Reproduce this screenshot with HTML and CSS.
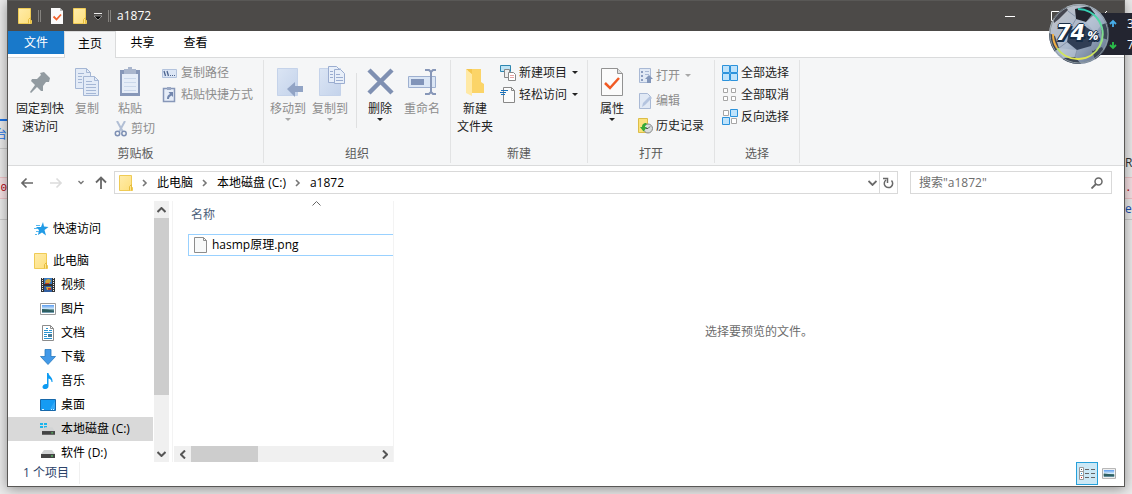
FILE: index.html
```html
<!DOCTYPE html>
<html lang="zh-CN">
<head>
<meta charset="utf-8">
<title>a1872</title>
<link rel="stylesheet" href="styles.css">
</head>
<body>
<svg class="defs" aria-hidden="true">
  <defs>
    <linearGradient id="gold" x1="0" y1="0" x2="1" y2="1"><stop offset="0" stop-color="#ffecaa"/><stop offset="1" stop-color="#fddf7c"/></linearGradient>
    <linearGradient id="sky" x1="0" y1="0" x2="0" y2="1"><stop offset="0" stop-color="#5a9cf0"/><stop offset=".5" stop-color="#d5ebfa"/><stop offset=".6" stop-color="#3f7474"/><stop offset="1" stop-color="#7fa6bd"/></linearGradient>
    <linearGradient id="steel" x1="0" y1="0" x2="1" y2="1"><stop offset="0" stop-color="#dbe5f4"/><stop offset="1" stop-color="#c4d3eb"/></linearGradient>
    <symbol id="folder" viewBox="0 0 14 16"><path d="M.5.5h12v11l1 1v3H.5z" fill="url(#gold)" stroke="#efcb55"/><path d="M10.500 15.500v-4l2-2v6" fill="#ffe48a" stroke="#e6bd3e"/></symbol>
    <symbol id="picture" viewBox="0 0 16 12"><path d="M.5.5h15v11H.5z" fill="#fff" stroke="#9b9b9b"/><path d="M2 2h12v8H2z" fill="url(#sky)"/><path d="M2 6q5 0 12 2v1H2z" fill="#2f5f62"/></symbol>
    <symbol id="down" viewBox="0 0 6 4"><path d="M0 0h6L3 3z" fill="currentColor"/></symbol>
    <symbol id="chev" viewBox="0 0 6 8"><path d="M1 1l3 3-3 3" fill="none" stroke="#777" stroke-width="1.6"/></symbol>
    <symbol id="drive" viewBox="0 0 14 9"><path d="M3 0h8l3 4H0z" fill="#d2d4d5"/><path d="M0 4h14v4H0z" fill="#444"/><path d="M10 5.500h2v1h-2z" fill="#5ee36c"/></symbol>
  </defs>
</svg>

<aside class="edge edge-left">
  <div class="edge-tab">台</div>
  <div class="edge-gap"></div>
  <div class="edge-error">80</div>
  <div class="edge-row"></div>
</aside>

<main class="window">
  <header class="titlebar">
    <svg class="t-folder" width="14" height="16"><use href="#folder"/></svg>
    <i class="grip"></i>
    <svg class="t-doc" width="12" height="16" viewBox="0 0 12 16"><path d="M0 0h9l3 3v13H0z" fill="#fafafa"/><path d="M9 0v3h3" fill="#bbb"/><path d="M2.500 8.500l3 3 4.500-5" fill="none" stroke="#f0622d" stroke-width="1.800"/></svg>
    <svg class="t-folder2" width="14" height="16"><use href="#folder"/></svg>
    <svg class="t-more" width="8" height="8" viewBox="0 0 8 8"><path d="M0 1.500h8" stroke="#eee"/><path d="M0 4h8L4 8z" fill="#000" stroke="#ccc" stroke-width=".6"/></svg>
    <i class="grip"></i>
    <h1>a1872</h1>
    <div class="controls">
      <button aria-label="最小化"><svg width="10" height="10" viewBox="0 0 10 10"><path d="M0 5.500h10" stroke="#fff"/></svg></button>
      <button aria-label="最大化"><svg width="10" height="10" viewBox="0 0 10 10"><path d="M.5.5h9v9h-9z" fill="none" stroke="#fff"/></svg></button>
      <button aria-label="关闭"><svg width="10" height="10" viewBox="0 0 10 10"><path d="M0 0l10 10M10 0L0 10" stroke="#fff"/></svg></button>
    </div>
  </header>

  <nav class="tabs">
    <button class="tab file">文件</button>
    <button class="tab active">主页</button>
    <button class="tab">共享</button>
    <button class="tab">查看</button>
  </nav>

  <section class="ribbon">
    <div class="group g-clip">
      <div class="tools">
        <button class="big pin"><svg width="32" height="34" viewBox="0 0 32 34"><path d="M16 7l4-1 6 6-1 4-3 0-3 4 0 5-2 0-4-4-6 6-1-1 5-7-4-4 1-2 5 0 4-4z" fill="#929ba1"/></svg><span>固定到快<br>速访问</span></button>
        <button class="big copy off"><svg width="26" height="34" viewBox="0 0 26 34"><g fill="#e3ebf7" stroke="#a5b7d5"><path d="M1.500 2.500h11l4 4v16h-15z"/><path d="M9.500 10.500h11l4 4v15h-15z"/></g><path d="M20.500 10.500v4h4M12.500 2.500v4h4" fill="none" stroke="#a5b7d5"/><path d="M4 7.500h6M4 10.500h4M4 13.500h4M4 16.500h4M12 15.500h6M12 18.500h10M12 21.500h10M12 24.500h10M12 27.500h10" stroke="#a5b7d5"/></svg><span>复制</span></button>
        <div class="paste-col">
          <button class="big off"><svg width="22" height="34" viewBox="0 0 22 34"><path d="M1 4h20v26H1z" fill="#8797b8"/><path d="M3 8h16v19H3z" fill="#e6edf8"/><path d="M5 12.500h12M5 16.500h12M5 20.500h12M5 24.500h12" stroke="#cbd8eb"/><path d="M5 3h4V1h4v2h4v5H5z" fill="#aab6cd"/></svg><span>粘贴</span></button>
          <button class="small off cut"><svg width="14" height="16" viewBox="0 0 14 16"><path d="M3 0l6 11M11 0L5 11" stroke="#b2bfd5" stroke-width="2"/><circle cx="3.500" cy="12.500" r="2.200" fill="none" stroke="#7e90b4" stroke-width="1.500"/><circle cx="10" cy="12.500" r="2.200" fill="none" stroke="#7e90b4" stroke-width="1.500"/></svg>剪切</button>
        </div>
        <div class="stack">
          <button class="small off"><svg width="15" height="16" viewBox="0 0 15 16"><path d="M.5 4.500h14v8H.5z" fill="#dce6f5" stroke="#b3c3dd"/><path d="M2 6l1.500 5M5 6l1.500 5" stroke="#4d648e" stroke-width="1.300"/><path d="M8 10.500h1M10 10.500h1M12 10.500h1" stroke="#4d648e"/></svg>复制路径</button>
          <button class="small off"><svg width="15" height="16" viewBox="0 0 15 16"><path d="M1.500 1.500h11v13h-11z" fill="#e6edf8" stroke="#8797b8" stroke-width="1.500"/><path d="M5 0h4v3H5z" fill="#9aa8c4"/><path d="M5 12c0-3 1-4 3-5L6.500 5H11v5L9.500 8.500C8 9.500 7 10 7 12z" fill="#7286ad"/></svg>粘贴快捷方式</button>
        </div>
      </div>
      <h2>剪贴板</h2>
    </div>

    <div class="group g-org">
      <div class="tools">
        <button class="big off"><svg width="32" height="34" viewBox="0 0 32 34"><path d="M5.500 2.500h20v27h-20z" fill="url(#steel)" stroke="#c5d3ea"/><path d="M15 23l8-7v4h8v6h-8v5z" fill="#92a4c5"/></svg><span>移动到</span><svg class="arrow" width="6" height="4"><use href="#down"/></svg></button>
        <button class="big off"><svg width="32" height="34" viewBox="0 0 32 34"><path d="M5.500 2.500h21v27h-21z" fill="url(#steel)" stroke="#c5d3ea"/><g fill="#e8eff9" stroke="#9badd0"><path d="M14.500.5h8l3 3v13h-11z"/><path d="M20.500 3.500h6l4 4v10h-10z"/></g><path d="M16 5.500h3M16 8.500h3M16 11.500h3M22 8.500h4M22 11.500h7M22 14.500h7" stroke="#9badd0"/></svg><span>复制到</span><svg class="arrow" width="6" height="4"><use href="#down"/></svg></button>
        <i class="rule"></i>
        <button class="big del"><svg width="28" height="34" viewBox="0 0 28 34"><path d="M3 4l23 23M26 4L3 27" stroke="#7f90b2" stroke-width="4.500"/></svg><span>删除</span><svg class="arrow" width="6" height="4"><use href="#down"/></svg></button>
        <button class="big off ren"><svg width="30" height="34" viewBox="0 0 30 34"><path d="M1.500 10.500h27v11h-27z" fill="#dbe6f5" stroke="#9eb0d0"/><path d="M4 13h13v6H4z" fill="#8194b9"/><path d="M18 4h4l2 2 2-2h3M18 28h4l2-2 2 2h3M24 5v22" fill="none" stroke="#8797b8" stroke-width="2"/></svg><span>重命名</span></button>
      </div>
      <h2>组织</h2>
    </div>

    <div class="group g-new">
      <div class="tools">
        <button class="big"><svg width="22" height="34" viewBox="0 0 22 34"><path d="M4 3h13v13l3 2v9H4z" fill="#fbd468"/><path d="M2 3l6 5v22l-6-3z" fill="#ffe9a5"/><path d="M2 3h6v5z" fill="#f4c64f"/></svg><span>新建<br>文件夹</span></button>
        <div class="stack">
          <button class="small"><svg width="16" height="16" viewBox="0 0 16 16"><path d="M.5.500h10v6H.5z" fill="#bde3f4" stroke="#2d86b0"/><path d="M4.500 4.500h5v8h-5z" fill="#eee" stroke="#888"/><path d="M8.500 7.500h5l2 2v6h-7z" fill="#fff" stroke="#888"/><path d="M10 10.500h4M10 12.500h4" stroke="#e7a4a4"/></svg>新建项目<svg class="more" width="6" height="4"><use href="#down"/></svg></button>
          <button class="small"><svg width="16" height="16" viewBox="0 0 16 16"><path d="M3.500.5h8l3 3v12h-11z" fill="#fcfcfc" stroke="#888"/><path d="M11.500.5v3h3" fill="none" stroke="#888"/><path d="M1 3.500h7M0 5.500h6M1 7.500h4" stroke="#1a73bd"/></svg>轻松访问<svg class="more" width="6" height="4"><use href="#down"/></svg></button>
        </div>
      </div>
      <h2>新建</h2>
    </div>

    <div class="group g-open">
      <div class="tools">
        <button class="big"><svg width="22" height="34" viewBox="0 0 22 34"><path d="M.5 2.500h16l5 5v22H.5z" fill="#fbfbfb" stroke="#929292"/><path d="M16.500 2.500v5h5" fill="#ddd" stroke="#929292"/><path d="M4 17l5 5 9-10" fill="none" stroke="#f15a24" stroke-width="2.500"/></svg><span>属性</span><svg class="arrow" width="6" height="4"><use href="#down"/></svg></button>
        <div class="stack tall">
          <button class="small off"><svg width="15" height="16" viewBox="0 0 15 16"><path d="M1.500.5h11v14h-11z" fill="#e1e9f5" stroke="#a9b9d5"/><path d="M3 3h2v2H3zM3 7h2v2H3zM3 11h2v2H3z" fill="#8a9cbf"/><path d="M7 3.500h4M7 6.500h4" stroke="#a9b9d5"/><path d="M11 7l4 4h-2v4h-4v-4H7z" fill="#8296ba"/></svg>打开<svg class="more" width="6" height="4"><use href="#down"/></svg></button>
          <button class="small off"><svg width="15" height="16" viewBox="0 0 15 16"><path d="M1.500.5h8l3 3v12h-11z" fill="#e1e9f5" stroke="#a9b9d5"/><path d="M4 14l1-4 7-7 2 2-7 7z" fill="#b4c4df"/></svg>编辑</button>
          <button class="small"><svg width="15" height="16" viewBox="0 0 15 16"><path d="M.5.500h9v14H.5z" fill="#fbe27c" stroke="#dcbd48"/><circle cx="10" cy="10.500" r="4.500" fill="#d8dddd" stroke="#888"/><path d="M10 10.500l2-2M10 10.500H8" stroke="#555"/><path d="M8.500 5C5 5 4 7 4 9H2l3.500 4.500L9 9H7c0-1 0-2 1.500-2z" fill="#37a936"/></svg>历史记录</button>
        </div>
      </div>
      <h2>打开</h2>
    </div>

    <div class="group g-select">
      <div class="tools">
        <div class="stack">
          <button class="small"><svg width="16" height="16" viewBox="0 0 16 16"><path d="M.5.5h7v7h-7zM8.500.5h7v7h-7zM.5 8.500h7v7h-7zM8.500 8.500h7v7h-7z" fill="#bfe3fb" stroke="#2c93dc"/></svg>全部选择</button>
          <button class="small"><svg width="16" height="16" viewBox="0 0 16 16"><path d="M1.500 1.500h4v4h-4zM9.500 1.500h4v4h-4zM1.500 9.500h4v4h-4zM9.500 9.500h4v4h-4z" fill="#fff" stroke="#a6a6a6"/></svg>全部取消</button>
          <button class="small"><svg width="16" height="16" viewBox="0 0 16 16"><path d="M1.500 1.500h5v5h-5zM9.500 9.500h5v5h-5z" fill="#fff" stroke="#a6a6a6"/><path d="M8.500.5h7v7h-7zM.5 8.500h7v7h-7z" fill="#bfe3fb" stroke="#2c93dc"/></svg>反向选择</button>
        </div>
      </div>
      <h2>选择</h2>
    </div>
  </section>

  <section class="address">
    <div class="arrows">
      <button aria-label="后退"><svg width="14" height="12" viewBox="0 0 14 12"><path d="M13 6H2M6.500 1.500L2 6l4.500 4.500" fill="none" stroke="#686868" stroke-width="1.700"/></svg></button>
      <button aria-label="前进"><svg width="14" height="12" viewBox="0 0 14 12"><path d="M1 6h11M7.500 1.500L12 6l-4.500 4.500" fill="none" stroke="#dcdcdc" stroke-width="1.700"/></svg></button>
      <button aria-label="最近位置" class="recent"><svg width="6" height="5" viewBox="0 0 6 5"><path d="M.5 1L3 3.500 5.500 1" fill="none" stroke="#777" stroke-width="1.400"/></svg></button>
      <button aria-label="向上"><svg width="12" height="13" viewBox="0 0 12 13"><path d="M6 13V2M1 6.500l5-5 5 5" fill="none" stroke="#686868" stroke-width="1.800"/></svg></button>
    </div>
    <div class="path">
      <svg width="14" height="16"><use href="#folder"/></svg>
      <svg class="chev" width="6" height="8"><use href="#chev"/></svg>
      <a href="#">此电脑</a>
      <svg class="chev" width="6" height="8"><use href="#chev"/></svg>
      <a href="#">本地磁盘 (C:)</a>
      <svg class="chev" width="6" height="8"><use href="#chev"/></svg>
      <a href="#">a1872</a>
      <button class="drop" aria-label="历史"><svg width="9" height="6" viewBox="0 0 9 6"><path d="M.5 1l4 4 4-4" fill="none" stroke="#6a6a6a" stroke-width="1.800"/></svg></button>
      <button class="refresh" aria-label="刷新"><svg width="11" height="12" viewBox="0 0 11 12"><path d="M3 3a4.200 4.200 0 1 0 5.500.5M0 1.500h4.500V6" fill="none" stroke="#686868" stroke-width="1.500"/></svg></button>
    </div>
    <label class="search"><input type="text" placeholder='搜索"a1872"' aria-label="搜索"><svg width="12" height="12" viewBox="0 0 12 12"><circle cx="7.500" cy="4.500" r="3.500" fill="none" stroke="#686868" stroke-width="1.500"/><path d="M5 7L.5 11.500" stroke="#686868" stroke-width="1.800"/></svg></label>
  </section>

  <section class="body">
    <nav class="tree">
      <a href="#" class="root quick"><svg width="15" height="14" viewBox="0 0 15 14"><path d="M9 0l1 4.500 4.500.500-4 3 1.500 5.500L8 10.500 4 13l1-5-3-3h5z" fill="#219be6"/><path d="M0 6.500h4M2 9.500h3M2 3.500h4M1 12.500h2" stroke="#58b7ed"/></svg>快速访问</a>
      <a href="#" class="root"><svg width="14" height="16"><use href="#folder"/></svg>此电脑</a>
      <a href="#"><svg width="16" height="16" viewBox="0 0 16 16"><path d="M1 1h14v14H1z" fill="#333"/><path d="M4 1h8v6H4z" fill="#397bc2"/><path d="M4 9h8v6H4z" fill="#315fa1"/><path d="M5 4q4-4 6 0l-2 3H6zM6 10h5v3H7z" fill="#d0a53c"/><path d="M5 6h4v1H5zM8 11h3v2H8z" fill="#bd3d26"/><path d="M2.500 1v14M13.500 1v14" stroke="#eee" stroke-dasharray="1 1"/></svg>视频</a>
      <a href="#"><svg width="16" height="12"><use href="#picture"/></svg>图片</a>
      <a href="#"><svg width="16" height="16" viewBox="0 0 16 16"><path d="M2.500.5h8l3 3v12h-11z" fill="#fff" stroke="#8c8c8c"/><path d="M10.500.5v3h3" fill="none" stroke="#8c8c8c"/><path d="M6 3.500h2M4 5.500h4M9 5.500h3M4 7.500h8M4 9.500h3M4 11.500h3M4 13.500h8" stroke="#2793d1"/><path d="M8 9h4v3H8z" fill="#477b99"/></svg>文档</a>
      <a href="#"><svg width="16" height="16" viewBox="0 0 16 16"><path d="M5 .5h6v7h4.500L8 15.500.5 7.500H5z" fill="#4299e8" stroke="#2779be" stroke-width=".8"/></svg>下载</a>
      <a href="#"><svg width="16" height="16" viewBox="0 0 16 16"><path d="M7 0h1.500c0 3 4.500 4 4 9h-1c0-2-1-3-3-3.500V13c0 4-6 4-6 1 0-2 2-3.500 4.500-3z" fill="#0c9bf2"/></svg>音乐</a>
      <a href="#"><svg width="16" height="12" viewBox="0 0 16 12"><path d="M.5.5h15v11H.5z" fill="#159bf3" stroke="#1768aa"/><path d="M10 10l5-8v8z" fill="#35aaf8"/><path d="M2 10.500h2M11 10.500h1M13 10.500h1" stroke="#d8f0ff"/></svg>桌面</a>
      <a href="#" class="selected"><svg width="16" height="14" viewBox="0 0 16 14"><path d="M0 1h3v2H0zM4 1h3v2H4zM0 4h3v2H0zM4 4h3v2H4z" fill="#1bb5ed"/><svg x="2" y="5" width="13" height="9"><use href="#drive"/></svg></svg>本地磁盘 (C:)</a>
      <a href="#"><svg width="16" height="12" viewBox="0 0 16 12"><svg x="1" y="3" width="14" height="9"><use href="#drive"/></svg></svg>软件 (D:)</a>
    </nav>
    <div class="vbar">
      <button aria-label="向上滚动"><svg width="9" height="6" viewBox="0 0 9 6"><path d="M.5 5l4-4 4 4" fill="none" stroke="#555" stroke-width="2"/></svg></button>
      <i class="vthumb"></i>
      <button aria-label="向下滚动"><svg width="9" height="6" viewBox="0 0 9 6"><path d="M.5 1l4 4 4-4" fill="none" stroke="#555" stroke-width="2"/></svg></button>
    </div>
    <div class="files">
      <button class="column"><svg width="9" height="5" viewBox="0 0 9 5"><path d="M.5 4.500l4-4 4 4" fill="none" stroke="#666"/></svg><span>名称</span></button>
      <a href="#" class="item"><svg width="13" height="16" viewBox="0 0 13 16"><path d="M.5.500h9l3 3v12H.5z" fill="#f8f9f9" stroke="#8d8d8d"/><path d="M9.500.5v3h3" fill="none" stroke="#8d8d8d"/></svg>hasmp原理.png</a>
      <div class="hbar">
        <button aria-label="向左滚动"><svg width="6" height="9" viewBox="0 0 6 9"><path d="M5 .5l-4 4 4 4" fill="none" stroke="#555" stroke-width="2"/></svg></button>
        <i class="hthumb"></i>
        <button aria-label="向右滚动"><svg width="6" height="9" viewBox="0 0 6 9"><path d="M1 .5l4 4-4 4" fill="none" stroke="#555" stroke-width="2"/></svg></button>
      </div>
    </div>
    <p class="preview">选择要预览的文件。</p>
  </section>

  <footer class="status">
    <span>1 个项目</span>
    <div class="views">
      <button class="on" aria-label="详细信息"><svg width="16" height="13" viewBox="0 0 16 13"><path d="M.5.500h4v12h-4zM.5 4.500h4M.5 8.500h4" fill="#fff" stroke="#999"/><path d="M2 2h1v1H2z" fill="#555"/><path d="M2 6h1v1H2z" fill="#2592dc"/><path d="M2 10h1v1H2z" fill="#d52020"/><path d="M6 2.500h4M12 2.500h4M6 6.500h4M12 6.500h4M6 10.500h4M12 10.500h4" stroke="#666"/></svg></button>
      <button aria-label="大图标"><svg width="14" height="11"><use href="#picture"/></svg></button>
    </div>
  </footer>
</main>

<aside class="edge edge-right">
  <div class="edge-name">R</div>
  <div class="edge-error">.</div>
  <div class="edge-row">el</div>
</aside>

<div class="meter">
  <svg class="ball" width="60" height="62" viewBox="0 0 60 62">
    <defs>
      <clipPath id="round"><circle cx="30" cy="31" r="30"/></clipPath>
      <linearGradient id="ballfill" x1="0" y1="0" x2="1" y2="1"><stop offset="0" stop-color="#c5c5c8"/><stop offset=".5" stop-color="#a9b8cd"/><stop offset="1" stop-color="#52647f"/></linearGradient>
      <linearGradient id="ring" x1="0" y1="0" x2="0" y2="1"><stop offset="0" stop-color="#2fd0b8"/><stop offset=".6" stop-color="#8fe086"/><stop offset="1" stop-color="#e4e64d"/></linearGradient>
    </defs>
    <g clip-path="url(#round)">
      <path d="M0 0h60v62H0z" fill="url(#ballfill)"/>
      <path d="M26 6l14-3 6 8-9 8-10-3z" fill="#22242e"/>
      <path d="M3 6l12-5 4 6-9 9-5 4z" fill="#454650"/>
      <path d="M20 28l14-6 12 8-4 13-14 4-10-8z" fill="#303e55"/>
      <path d="M0 30l6 3 4 12-5 4-5-6zM52 22l8-3v18l-7-2zM14 55l12-1 7 8H14zM43 48l10-4 3 6-9 9z" fill="#3c4657"/>
      <path d="M37 19l7-9 9 11-7 9zM9 45l19 2-2 7-12 1z" fill="#c0cad8" opacity=".55"/>
      <path d="M27 16l-7 12M19 8l8 6M46 30l7-4M42 43l3 5M28 47l-2 7M18 39l-8 6" stroke="#8795aa"/>
    </g>
    <circle cx="30" cy="31" r="29" fill="none" stroke="#8e9aa0" stroke-width="1"/>
    <path d="M29 6a25 25 0 1 1-21 39" fill="none" stroke="url(#ring)" stroke-width="2"/>
    <path d="M8 45A25 25 0 0 1 4 31" fill="none" stroke="#f0ae42" stroke-width="2"/>
  </svg>
  <div class="percent"><b>74</b><small>%</small></div>
  <div class="net">
    <div><svg width="10" height="12" viewBox="0 0 10 12"><path d="M5 9V4M2 6l3-3 3 3" fill="none" stroke="#47ade9" stroke-width="1.800"/></svg><span>3</span></div>
    <div><svg width="10" height="12" viewBox="0 0 10 12"><path d="M5 3v5M2 6l3 3 3-3" fill="none" stroke="#2bc04a" stroke-width="1.800"/></svg><span>7</span></div>
  </div>
</div>
</body>
</html>
```

FILE: styles.css
```css
* { box-sizing: border-box; }

body {
  margin: 0;
  height: 100vh;
  display: flex;
  overflow: hidden;
  background: #ebebeb;
  color: #000;
  font: 12px/18px "Open Sans", "Noto Sans CJK SC", sans-serif;
}

button {
  margin: 0;
  padding: 0;
  border: 0;
  background: none;
  font: inherit;
  color: inherit;
}

a { color: inherit; text-decoration: none; }
svg { display: block; flex: none; }
i { display: block; flex: none; }
h1, h2, p { margin: 0; font-size: 12px; font-weight: 400; }
.defs { position: absolute; width: 0; height: 0; }

/* Page that shows at both sides of the window */
.edge { width: 7px; flex: none; overflow: hidden; white-space: nowrap; }
.edge-tab { margin-top: 119px; height: 30px; border-top: 2px solid #1a73e8; border-bottom: 1px solid #ccc; color: #1a73e8; line-height: 28px; direction: rtl; }
.edge-gap { height: 28px; }
.edge-error { height: 22px; background: #f6e1e4; border: solid #efc4c8; border-width: 1px 0; color: #b00010; font: 11px/20px "Liberation Mono", monospace; }
.edge-left .edge-error { direction: rtl; }
.edge-row { height: 21px; border-bottom: 1px solid #ccc; color: #1a4fb0; line-height: 20px; }
.edge-name { margin-top: 153px; height: 24px; line-height: 20px; color: #333; }

.window {
  flex: 1;
  min-width: 0;
  margin-bottom: 7px;
  display: flex;
  flex-direction: column;
  position: relative;
  background: #fff;
  border: solid #595856;
  border-width: 0 1px 1px;
  box-shadow: 0 2px 12px rgba(0, 0, 0, .4);
}

.titlebar { height: 31px; flex: none; display: flex; align-items: center; padding-left: 10px; background: #4c4a48; border-top: 1px solid #595856; color: #fff; }
.grip { width: 3px; height: 12px; border: solid #85837f; border-width: 0 1px; }
.t-folder { margin-right: 6px; }
.t-doc { margin: 0 10px; }
.t-folder2 { margin-right: 7px; }
.t-more { margin-right: 6px; }
.titlebar h1 { margin-left: 6px; }
.controls { margin-left: auto; display: flex; padding-right: 17px; }
.controls button { width: 10px; margin-left: 36px; }

.tabs { height: 27px; flex: none; display: flex; border-bottom: 1px solid #dadbdc; }
.tab { width: 53px; height: 24px; }
.tab.file { width: 56px; height: 23px; background: #1979ca; color: #fff; }
.tab.active { width: 52px; height: 27px; padding-bottom: 3px; background: #f5f6f7; border: solid #dadbdc; border-width: 1px 1px 0; }

.ribbon { display: flex; height: 108px; flex: none; background: #f5f6f7; border-bottom: 1px solid #dadbdc; color: #222; }
.group { margin: 2px 0; border-right: 1px solid #e2e3e4; display: flex; flex-direction: column; }
.tools { flex: 1; display: flex; align-items: flex-start; padding-top: 2px; }
.group h2 { line-height: 18px; text-align: center; color: #5a5a5a; }
.g-clip { width: 256px; }
.g-org { width: 187px; }
.g-new { width: 137px; }
.g-open { width: 127px; }
.g-select { width: 85px; }
.g-org .tools, .g-new .tools { padding-left: 3px; }
.g-open .tools { padding-left: 5px; }
.g-select .tools { padding-left: 7px; }

.big { width: 42px; padding-top: 4px; display: flex; flex-direction: column; align-items: center; white-space: nowrap; }
.pin { width: 64px; }
.copy { width: 30px; }
.del { width: 40px; }
.ren { width: 44px; }
.paste-col { width: 54px; margin-right: 6px; display: flex; flex-direction: column; }
.paste-col .big { width: 56px; }
.cut { padding-left: 12px; }
.off { color: #8d8d8d; }
.arrow { color: #222; }
.off .arrow, .off .more { color: #a8a8a8; }
.rule { width: 1px; height: 55px; margin: 11px 3px 0 5px; background: #dfe0e1; }
.small { height: 22px; display: flex; align-items: center; gap: 3px; white-space: nowrap; }
.stack { display: flex; flex-direction: column; }
.g-clip .stack .small { gap: 4px; }
.g-new .stack { margin-left: 4px; }
.g-open .big { width: 38px; }
.g-open .stack { margin-left: 7px; }
.tall { margin-top: 1px; }
.tall .small { height: 25px; }
.more { margin-left: 2px; }

.address { display: flex; flex: none; align-items: center; height: 35px; padding: 0 12px 2px 12px; }
.arrows { display: flex; align-items: center; width: 94px; gap: 15px; }
.arrows .recent { margin-right: -4px; }
.path { flex: 1; height: 23px; display: flex; align-items: center; border: 1px solid #d9d9d9; padding-left: 4px; }
.path .chev { margin: 0 9px; }
.path .chev:nth-of-type(1) { margin-left: 8px; }
.drop { margin-left: auto; width: 14px; display: flex; justify-content: center; }
.refresh { width: 18px; height: 21px; border-left: 1px solid #d9d9d9; display: flex; align-items: center; justify-content: center; }
.search { width: 202px; height: 23px; margin-left: 12px; padding: 0 8px; border: 1px solid #d9d9d9; display: flex; align-items: center; }
.search input { flex: 1; min-width: 0; padding: 0; border: 0; outline: 0; font: inherit; }
.search input::placeholder { color: #6d6d6d; opacity: 1; }

.body { flex: 1; display: flex; min-height: 0; }
.tree { width: 145px; padding-top: 16px; overflow: hidden; white-space: nowrap; }
.tree a { height: 24px; display: flex; align-items: center; gap: 5px; padding-left: 32px; }
.tree .root { padding-left: 26px; }
.tree .quick { margin-bottom: 8px; gap: 4px; }
.tree .selected { background: #d9d9d9; }
.vbar { width: 15px; margin-left: 1px; display: flex; flex-direction: column; background: #f0f0f0; }
.vbar button { height: 17px; display: flex; align-items: center; justify-content: center; }
.vbar button:last-child { margin-top: auto; }
.vthumb { height: 177px; background: #cdcdcd; }
.files { width: 222px; margin-left: 3px; display: flex; flex-direction: column; border: solid #f3f3f3; border-width: 0 1px; }
.column { margin-left: 18px; height: 33px; display: flex; flex-direction: column; text-align: left; color: #4c607a; }
.column svg { align-self: center; margin-left: 48px; }
.column span { line-height: 18px; }
.item { height: 22px; margin-left: 15px; padding-left: 5px; display: flex; align-items: center; gap: 5px; border: 1px solid #99d1ff; border-right: 0; }
.hbar { height: 16px; margin-top: auto; margin-left: 1px; display: flex; background: #f0f0f0; }
.hbar button { width: 17px; display: flex; align-items: center; justify-content: center; }
.hbar button:last-child { margin-left: auto; }
.hthumb { width: 67px; background: #cdcdcd; }
.preview { flex: 1; align-self: center; text-align: center; color: #6d6d6d; }

.status { height: 24px; flex: none; display: flex; align-items: flex-start; padding: 0 4px 0 15px; color: #2b4269; }
.status > span { line-height: 22px; padding-right: 10px; border-right: 1px solid #f0f0f0; }
.views { margin-left: auto; display: flex; }
.views button { width: 22px; height: 23px; display: flex; align-items: center; justify-content: center; }
.views .on { background: #cbe8f6; border: 1px solid #26a0da; }

/* Floating load meter over the window corner */
.meter { position: absolute; top: 3px; right: 0; width: 83px; height: 62px; }
.ball { position: absolute; left: 0; top: 0; z-index: 1; }
.percent { position: absolute; left: 7px; top: 15px; z-index: 2; color: #fff; font-style: italic; line-height: 30px; white-space: nowrap; text-shadow: 1px 0 #172c45, -1px 0 #172c45, 0 1px #172c45, 0 -1px #172c45, 2px 2px #172c45, -1px 2px #172c45; }
.percent b { font: italic 700 21px/30px "DejaVu Sans", sans-serif; }
.percent small { margin-left: 2px; font-size: 13px; font-weight: 700; }
.net { position: absolute; right: 0; top: 10px; width: 35px; height: 42px; padding-left: 11px; background: #232530; color: #fff; overflow: hidden; }
.net div { height: 21px; display: flex; align-items: center; gap: 9px; }
```
